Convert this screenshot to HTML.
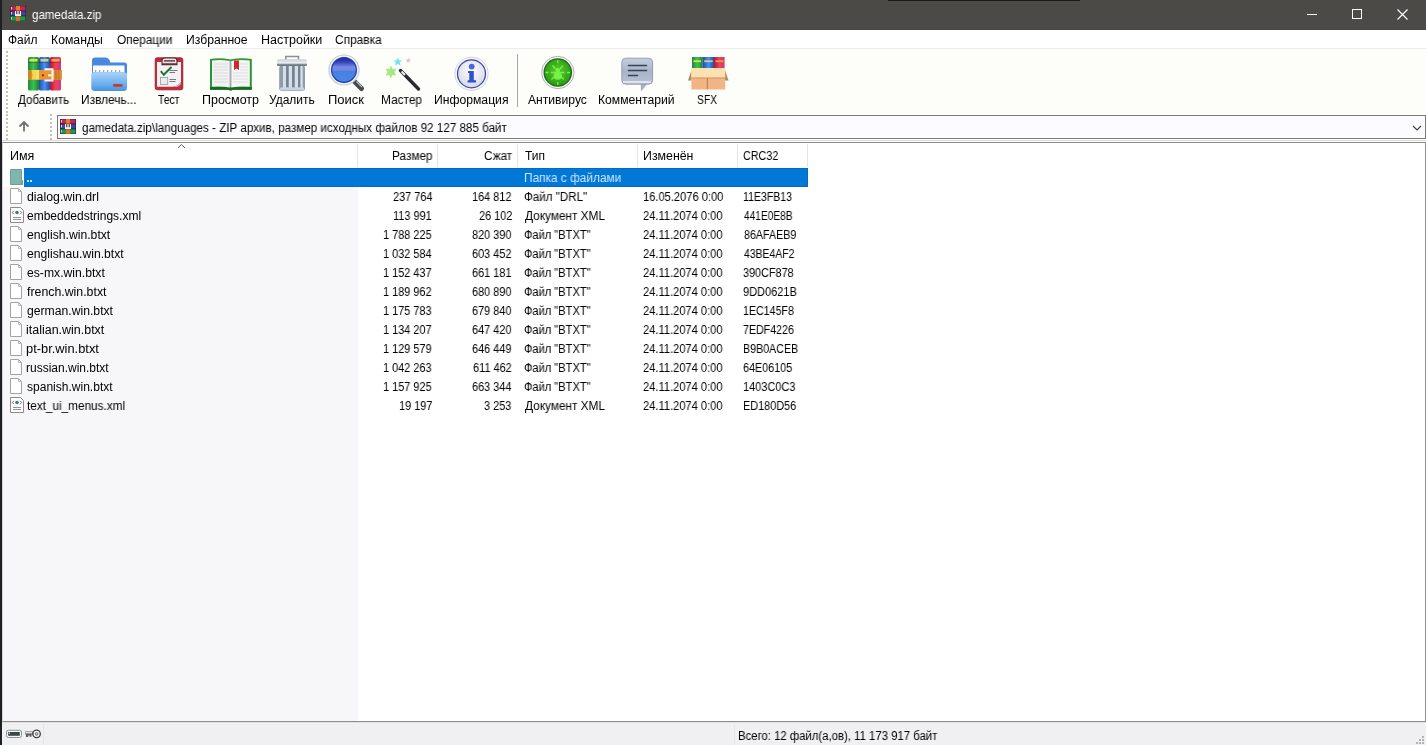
<!DOCTYPE html><html><head><meta charset="utf-8"><style>*{box-sizing:border-box}
html,body{margin:0;padding:0;width:1426px;height:745px;overflow:hidden;background:#fff;font-family:"Liberation Sans",sans-serif;font-size:12px;line-height:14px;color:#000}
.a{position:absolute;white-space:pre;transform-origin:0 0;will-change:transform}
.t{color:#000}
.r{text-align:right}
.ic{left:10px;width:12px;height:16px}
.ic svg{display:block}
.lbl{top:92px}
</style></head><body><div class="a" style="left:0;top:0;width:2px;height:745px;background:#1d2024"></div>
<div class="a" style="left:2px;top:0;width:1424px;height:30px;background:#4c4a47"></div>
<div class="a" style="left:888px;top:0;width:192px;height:1px;background:#1a1915"></div>
<!-- window controls -->
<div class="a" style="left:1307px;top:14px;width:10px;height:1px;background:#fff"></div>
<div class="a" style="left:1352px;top:9px;width:10px;height:10px;border:1px solid #fff"></div>
<svg class="a" style="left:1397px;top:9px" width="11" height="11" viewBox="0 0 11 11"><path d="M0.5 0.5L10.5 10.5M10.5 0.5L0.5 10.5" stroke="#fff" stroke-width="1.15"/></svg>
<!-- menu -->
<div class="a" style="left:2px;top:30px;width:1424px;height:19px;background:#fff"></div>
<div class="a" style="left:2px;top:48px;width:1424px;height:1px;background:#ededed"></div>
<!-- toolbar -->
<div class="a" style="left:2px;top:49px;width:1424px;height:93px;background:#fdfdfa"></div>
<!-- address -->
<div class="a" style="left:57px;top:115px;width:1369px;height:24px;border:1px solid #7a7a7a;background:#fcfcfe"></div>
<div class="a" style="left:2px;top:140px;width:1424px;height:1px;background:#dcdcdc"></div>
<!-- list -->
<div class="a" style="left:2px;top:142px;width:1424px;height:580px;background:#fff;border-top:1px solid #8c8c8c;border-left:1px solid #d4d4d4;border-right:1px solid #8c8c8c;border-bottom:1px solid #8c8c8c"></div>
<div class="a" style="left:3px;top:187px;width:355px;height:534px;background:#f7f6f9"></div>
<div class="a" style="left:357px;top:144px;width:1px;height:23px;background:#e5e5e5"></div>
<div class="a" style="left:437px;top:144px;width:1px;height:23px;background:#e5e5e5"></div>
<div class="a" style="left:517px;top:144px;width:1px;height:23px;background:#e5e5e5"></div>
<div class="a" style="left:637px;top:144px;width:1px;height:23px;background:#e5e5e5"></div>
<div class="a" style="left:737px;top:144px;width:1px;height:23px;background:#e5e5e5"></div>
<div class="a" style="left:807px;top:144px;width:1px;height:23px;background:#e5e5e5"></div>
<!-- selected row -->
<div class="a" style="left:24px;top:168px;width:784px;height:19px;background:#0078d7;border-top:1px solid #0a68c0;border-bottom:1px solid #0a68c0;border-right:1px solid #0a68c0"></div>
<svg class="a" style="left:10px;top:169px" width="13" height="17" viewBox="0 0 13 17"><path d="M0.5 0.5H11.5V10.5L12.5 11.5V15.5H0.5Z" fill="#80b6ab" stroke="#6f9f95"/><path d="M11 11V15" stroke="#6f9f95"/></svg>
<div class="a" style="left:27px;top:180px;width:2px;height:2px;background:#a8e4ff"></div><div class="a" style="left:30px;top:180px;width:2px;height:2px;background:#a8e4ff"></div>
<!-- status -->
<div class="a" style="left:2px;top:722px;width:1424px;height:23px;background:#f0eff2;border-top:1px solid #e2e2e2"></div>
<div class="a" style="left:43px;top:724px;width:1px;height:21px;background:#e6e6e6"></div>
<div class="a" style="left:734px;top:724px;width:1px;height:21px;background:#e6e6e6"></div><div class="a ic" style="top:188px"><svg width="13" height="17" viewBox="0 0 13 17"><path d="M0.5 0.5H8.5L11.5 3.5V15.5H0.5Z" fill="#fff" stroke="#a2a2a2"/><path d="M8.5 0.5V3.5H11.5" fill="none" stroke="#b8b8b8"/></svg>
</div><div class="a ic" style="top:207px"><svg width="15" height="17" viewBox="0 0 15 17"><path d="M0.5 0.5H10.5L13.5 3.5V15.5H0.5Z" fill="#fdfdfd" stroke="#8c8c8c"/><circle cx="7" cy="5.5" r="1.8" fill="#3c7f80"/><path d="M3.8 3.8L2.3 5.5L3.8 7.2M10.2 3.8L11.7 5.5L10.2 7.2" fill="none" stroke="#666" stroke-width="0.9"/><path d="M3 10.5H11M3 12.5H11" stroke="#888" stroke-width="0.9"/></svg>
</div><div class="a ic" style="top:226px"><svg width="13" height="17" viewBox="0 0 13 17"><path d="M0.5 0.5H8.5L11.5 3.5V15.5H0.5Z" fill="#fff" stroke="#a2a2a2"/><path d="M8.5 0.5V3.5H11.5" fill="none" stroke="#b8b8b8"/></svg>
</div><div class="a ic" style="top:245px"><svg width="13" height="17" viewBox="0 0 13 17"><path d="M0.5 0.5H8.5L11.5 3.5V15.5H0.5Z" fill="#fff" stroke="#a2a2a2"/><path d="M8.5 0.5V3.5H11.5" fill="none" stroke="#b8b8b8"/></svg>
</div><div class="a ic" style="top:264px"><svg width="13" height="17" viewBox="0 0 13 17"><path d="M0.5 0.5H8.5L11.5 3.5V15.5H0.5Z" fill="#fff" stroke="#a2a2a2"/><path d="M8.5 0.5V3.5H11.5" fill="none" stroke="#b8b8b8"/></svg>
</div><div class="a ic" style="top:283px"><svg width="13" height="17" viewBox="0 0 13 17"><path d="M0.5 0.5H8.5L11.5 3.5V15.5H0.5Z" fill="#fff" stroke="#a2a2a2"/><path d="M8.5 0.5V3.5H11.5" fill="none" stroke="#b8b8b8"/></svg>
</div><div class="a ic" style="top:302px"><svg width="13" height="17" viewBox="0 0 13 17"><path d="M0.5 0.5H8.5L11.5 3.5V15.5H0.5Z" fill="#fff" stroke="#a2a2a2"/><path d="M8.5 0.5V3.5H11.5" fill="none" stroke="#b8b8b8"/></svg>
</div><div class="a ic" style="top:321px"><svg width="13" height="17" viewBox="0 0 13 17"><path d="M0.5 0.5H8.5L11.5 3.5V15.5H0.5Z" fill="#fff" stroke="#a2a2a2"/><path d="M8.5 0.5V3.5H11.5" fill="none" stroke="#b8b8b8"/></svg>
</div><div class="a ic" style="top:340px"><svg width="13" height="17" viewBox="0 0 13 17"><path d="M0.5 0.5H8.5L11.5 3.5V15.5H0.5Z" fill="#fff" stroke="#a2a2a2"/><path d="M8.5 0.5V3.5H11.5" fill="none" stroke="#b8b8b8"/></svg>
</div><div class="a ic" style="top:359px"><svg width="13" height="17" viewBox="0 0 13 17"><path d="M0.5 0.5H8.5L11.5 3.5V15.5H0.5Z" fill="#fff" stroke="#a2a2a2"/><path d="M8.5 0.5V3.5H11.5" fill="none" stroke="#b8b8b8"/></svg>
</div><div class="a ic" style="top:378px"><svg width="13" height="17" viewBox="0 0 13 17"><path d="M0.5 0.5H8.5L11.5 3.5V15.5H0.5Z" fill="#fff" stroke="#a2a2a2"/><path d="M8.5 0.5V3.5H11.5" fill="none" stroke="#b8b8b8"/></svg>
</div><div class="a ic" style="top:397px"><svg width="15" height="17" viewBox="0 0 15 17"><path d="M0.5 0.5H10.5L13.5 3.5V15.5H0.5Z" fill="#fdfdfd" stroke="#8c8c8c"/><circle cx="7" cy="5.5" r="1.8" fill="#3c7f80"/><path d="M3.8 3.8L2.3 5.5L3.8 7.2M10.2 3.8L11.7 5.5L10.2 7.2" fill="none" stroke="#666" stroke-width="0.9"/><path d="M3 10.5H11M3 12.5H11" stroke="#888" stroke-width="0.9"/></svg>
</div><svg class="a" style="left:0;top:0" width="1426" height="745" viewBox="0 0 1426 745">
<defs>
<linearGradient id="gG" x1="0" x2="1" y1="0" y2="0"><stop offset="0" stop-color="#1e8a34"/><stop offset="0.5" stop-color="#3cc155"/><stop offset="1" stop-color="#1f7f30"/></linearGradient>
<linearGradient id="gB" x1="0" x2="1" y1="0" y2="0"><stop offset="0" stop-color="#1d4fb0"/><stop offset="0.5" stop-color="#4a8ff0"/><stop offset="1" stop-color="#2050a8"/></linearGradient>
<linearGradient id="gR" x1="0" x2="1" y1="0" y2="0"><stop offset="0" stop-color="#b01830"/><stop offset="0.5" stop-color="#f04060"/><stop offset="1" stop-color="#d03a70"/></linearGradient>
<linearGradient id="gBelt" x1="0" x2="0" y1="0" y2="1"><stop offset="0" stop-color="#f8c040"/><stop offset="0.5" stop-color="#e8a030"/><stop offset="1" stop-color="#b86a10"/></linearGradient>
<linearGradient id="gFolderF" x1="0" x2="0" y1="0" y2="1"><stop offset="0" stop-color="#a6d4fa"/><stop offset="0.6" stop-color="#6eb0f0"/><stop offset="1" stop-color="#4a90e0"/></linearGradient>
<linearGradient id="gTrashLid" x1="0" x2="0" y1="0" y2="1"><stop offset="0" stop-color="#c8ccd4"/><stop offset="0.5" stop-color="#e8ecf0"/><stop offset="1" stop-color="#8a9098"/></linearGradient>
<radialGradient id="gLens" cx="0.5" cy="0.35" r="0.6"><stop offset="0" stop-color="#7fa0f0"/><stop offset="0.7" stop-color="#3b6ee0"/><stop offset="1" stop-color="#1a38a8"/></radialGradient>
<radialGradient id="gInfo" cx="0.5" cy="0.4" r="0.6"><stop offset="0" stop-color="#ffffff"/><stop offset="1" stop-color="#d4d8e4"/></radialGradient>
<radialGradient id="gAV" cx="0.5" cy="0.45" r="0.55"><stop offset="0" stop-color="#58d028"/><stop offset="1" stop-color="#2c9a18"/></radialGradient>
<linearGradient id="gLens2" x1="0" x2="0" y1="0" y2="1"><stop offset="0" stop-color="#1c2896"/><stop offset="0.18" stop-color="#3444b8"/><stop offset="0.38" stop-color="#7a88e4"/><stop offset="0.52" stop-color="#6a86e4"/><stop offset="0.56" stop-color="#4a7ee0"/><stop offset="1" stop-color="#4a88e8"/></linearGradient>
<linearGradient id="gBub" x1="0" x2="0" y1="0" y2="1"><stop offset="0" stop-color="#c4cee0"/><stop offset="0.5" stop-color="#a8b4ca"/><stop offset="1" stop-color="#b8c2d4"/></linearGradient>
</defs>
<!-- ADD: winrar books -->
<g>
<rect x="28" y="57" width="11" height="33.5" rx="1.5" fill="url(#gG)"/>
<rect x="39" y="57" width="11" height="33.5" rx="1.5" fill="url(#gB)"/>
<rect x="50" y="57" width="11" height="33.5" rx="1.5" fill="url(#gR)"/>
<rect x="29.5" y="59" width="8" height="2.5" fill="#d8e050"/>
<rect x="40.5" y="59" width="8" height="2.5" fill="#d8c888"/>
<rect x="51.5" y="59" width="8" height="2.5" fill="#f8a040"/>
<rect x="28" y="62" width="33" height="1" fill="#000" opacity="0.2"/>
<rect x="28" y="70" width="33.7" height="9.6" fill="#e0a030"/>
<rect x="28" y="70" width="3.5" height="9.6" fill="#c88a20"/>
<path d="M31.5 70H37V79.6H31.5Q33.5 75 31.5 70Z" fill="#f4d658"/>
<rect x="36.5" y="70" width="2.5" height="9.6" fill="#f8e070"/>
<rect x="39" y="70" width="13" height="9.6" fill="#ea9434"/>
<rect x="54" y="70" width="7.7" height="9.6" fill="#e08a34"/>
<rect x="55.5" y="70" width="1" height="9.6" fill="#a85a10" opacity="0.7"/>
<rect x="58.2" y="70" width="1" height="9.6" fill="#a85a10" opacity="0.6"/>
<circle cx="43" cy="75.3" r="1.1" fill="#7a3000"/>
<rect x="48" y="74.3" width="3.5" height="2" fill="#fff4ea"/>
<path d="M44.5 69.2H52.5V80.5H44.5" fill="none" stroke="#fff8f0" stroke-width="2"/>
</g>
<!-- EXTRACT: folder -->
<g>
<path d="M92 60.5Q92 57.5 95 57.5H106Q108 57.5 109.5 60L110.5 62.5H124.5Q127 62.5 127 65V88H92Z" fill="#4a88e0"/>
<rect x="93" y="65.5" width="31.5" height="7" fill="#fbfdff"/>
<g fill="#9aa4b0"><rect x="95" y="70" width="1.2" height="2"/><rect x="99" y="70" width="1.2" height="2"/><rect x="103" y="70" width="1.2" height="2"/><rect x="107" y="70" width="1.2" height="2"/><rect x="111" y="70" width="1.2" height="2"/><rect x="115" y="70" width="1.2" height="2"/><rect x="119" y="70" width="1.2" height="2"/></g>
<path d="M91.3 74Q91.3 72.5 93 72.5H125Q127 72.5 127 74.5V87.5Q127 91 123.5 91H95Q91.3 91 91.3 87.5Z" fill="url(#gFolderF)"/>
<rect x="113" y="84" width="9.6" height="2.8" rx="1.4" fill="#c83a2a"/>
</g>
<!-- TEST: clipboard -->
<g>
<rect x="155.2" y="57.8" width="27.6" height="32" rx="2" fill="#c42a3a" stroke="#8e1824" stroke-width="0.8"/>
<path d="M157 62H181V82Q178 86.5 172 86.8H157Z" fill="#f2f2f4"/>
<path d="M172 86.8Q178 86.5 181 82V84Q179 88 172 86.8Z" fill="#c8a8ac"/>
<path d="M162 64.8V60.5Q162 58 165 58H174Q177 58 177 60.5V64.8Z" fill="#e8e4e6" stroke="#5a2630" stroke-width="1.1"/>
<rect x="164" y="60.2" width="11" height="1.4" fill="#6a2e38"/>
<rect x="162" y="63.3" width="15" height="1.5" fill="#5a2630"/>
<path d="M160.8 71.2L163.8 74.8L171.5 67" fill="none" stroke="#267434" stroke-width="2"/>
<rect x="160.5" y="77.5" width="7.2" height="7" fill="#ececf0" stroke="#9a9aa4" stroke-width="0.8"/>
<g fill="#6a6a74"><rect x="169.5" y="70" width="8" height="0.9"/><rect x="169.5" y="72" width="5.5" height="0.9"/><rect x="169.5" y="79" width="6.5" height="0.9"/><rect x="169.5" y="81" width="6" height="0.9"/></g>
</g>
<!-- VIEW: book -->
<g>
<path d="M210 59Q220 57.5 230.5 59.5Q241 57.5 251.8 59V89.8H233Q230.5 91 228 89.8H210Z" fill="#2a9636"/>
<path d="M210 87H251.8V89.8H233Q230.5 91 228 89.8H210Z" fill="#1a6a26"/>
<path d="M212 60.5Q221 59.5 230 61V87.5Q221 86 212 86.8Z" fill="#f2f2f3"/>
<path d="M231 61Q240 59.5 249.8 60.5V86.8Q240 86 231 87.5Z" fill="#f6f6f7"/>
<rect x="229" y="61" width="3" height="26" fill="#d4d4d8"/>
<rect x="230" y="61" width="1" height="26" fill="#a8a8ae"/>
<g stroke="#d2d2d8" stroke-width="0.7"><path d="M214 64H228M214 67H228M214 70H228M214 73H228M214 76H228M214 79H228M214 82H228M233 73H248M233 76H248M233 79H248M233 82H248M240 64H248M240 67H248M240 70H248"/></g>
<path d="M234 60.5H239V70L236.5 68.5L234 70Z" fill="#d02828"/>
</g>
<!-- DELETE: trash -->
<g>
<path d="M285.8 59.5V56.5H298.5V59.5" fill="none" stroke="#8a9098" stroke-width="1.6"/>
<rect x="279.2" y="65.5" width="25.8" height="25.3" rx="2.5" fill="#8e9cac"/>
<g fill="#d4dfea"><rect x="283" y="66" width="3.2" height="22"/><rect x="289" y="66" width="3.2" height="22"/><rect x="295" y="66" width="3.2" height="22"/><rect x="300.5" y="66" width="2.2" height="22"/></g>
<g fill="#6e7c8c"><rect x="286.2" y="66" width="1.6" height="21"/><rect x="292.2" y="66" width="1.6" height="21"/><rect x="298.2" y="66" width="1.6" height="21"/></g>
<rect x="280" y="87.5" width="24.2" height="2.5" rx="1" fill="#c8d2dc"/>
<rect x="277" y="59.3" width="29.9" height="6.4" rx="1.5" fill="url(#gTrashLid)"/>
<rect x="277" y="64.5" width="29.9" height="1.2" fill="#5a6470"/>
</g>
<!-- FIND: magnifier -->
<g>
<line x1="354.5" y1="81.5" x2="361.5" y2="88.5" stroke="#46494e" stroke-width="5" stroke-linecap="round"/>
<line x1="356.5" y1="81.5" x2="362" y2="87" stroke="#b8bcc0" stroke-width="1.2"/>
<circle cx="344" cy="70" r="15" fill="#f6fafc" stroke="#c4cace" stroke-width="1.2"/>
<circle cx="344" cy="70" r="13.6" fill="none" stroke="#d8f4f8" stroke-width="1"/>
<circle cx="344" cy="70" r="12.4" fill="url(#gLens2)"/>
<circle cx="344" cy="70" r="12.4" fill="none" stroke="#2436a8" stroke-width="1.2"/>
</g>
<!-- WIZARD -->
<g>
<line x1="400.5" y1="70.5" x2="418.5" y2="89" stroke="#2a2a2e" stroke-width="3.4" stroke-linecap="round"/>
<line x1="401.5" y1="71.5" x2="405" y2="75" stroke="#f0f0f4" stroke-width="2"/>
<path d="M391 65.5L392.6 69L396.5 68.8L394.4 72L396.3 75.4L392.5 75L391 78.5L389.3 75L385.5 75.4L387.5 72L385.5 68.8L389.4 69Z" fill="#a8e880"/>
<path d="M397.8 57.5L399 60.3L402 60.5L399.8 62.5L400.5 65.5L397.8 64L395 65.5L395.8 62.5L393.6 60.5L396.6 60.3Z" fill="#78e4f0"/>
<path d="M408.3 57.5L409.1 59.4L411.1 59.5L409.6 60.9L410.1 62.9L408.3 61.8L406.5 62.9L407 60.9L405.5 59.5L407.5 59.4Z" fill="#f4bcc8"/>
</g>
<!-- INFO -->
<g>
<circle cx="471.5" cy="73.8" r="16.6" fill="#f4f6fa" stroke="#c8ccd4" stroke-width="0.8"/>
<circle cx="471.5" cy="73.8" r="14" fill="url(#gInfo)" stroke="#3a44a8" stroke-width="1.2"/>
<circle cx="471.7" cy="66.6" r="2.9" fill="#4a66d8"/>
<path d="M468 71H473.8V80.3H476V82.6H467.6V80.3H469.3V73H468Z" fill="#3050d0"/>
</g>
<!-- separator -->
<rect x="517" y="54" width="1" height="53" fill="#a6a6a6"/>
<!-- ANTIVIRUS -->
<g>
<circle cx="557.8" cy="72.5" r="16.2" fill="#f8f8f8" stroke="#a8a8a8" stroke-width="0.9"/>
<circle cx="557.8" cy="72.5" r="14.3" fill="#1b6a1a"/>
<circle cx="557.8" cy="72.5" r="13" fill="url(#gAV)"/>
<g stroke="#78f048" stroke-width="1.3" fill="none">
<path d="M557.8 60V63M557.8 82V85M545.5 72.5H548.5M567 72.5H570"/>
<path d="M552.5 65.5L555.5 69M563 65.5L560 69M551 72.5H564.5M551.5 79.5L554.5 76.5M564 79.5L561 76.5"/>
</g>
<circle cx="557.8" cy="70.3" r="2.2" fill="#78f048"/>
<ellipse cx="557.8" cy="76" rx="4.2" ry="3.8" fill="#78f048"/>
</g>
<!-- COMMENT -->
<g>
<path d="M641 83.5L641.5 90.5L647 83.5Z" fill="#a8b2c4" stroke="#8a94a8" stroke-width="0.6"/>
<rect x="621.8" y="58.2" width="30.8" height="26" rx="4" fill="url(#gBub)" stroke="#8e98ac" stroke-width="0.9"/>
<rect x="623" y="81" width="28" height="2" fill="#e8ecf4" opacity="0.8"/>
<g stroke="#3a4252" stroke-width="1.6" stroke-linecap="round"><path d="M628.5 65.5H646.5M628.5 70.5H646.5M628.5 75.5H637.5"/></g>
</g>
<!-- SFX -->
<g>
<rect x="692" y="57" width="10.8" height="11.5" fill="url(#gG)"/>
<rect x="702.8" y="57" width="11.2" height="11.5" fill="url(#gB)"/>
<rect x="714" y="57" width="10.6" height="11.5" fill="url(#gR)"/>
<rect x="693.5" y="60.3" width="7.5" height="1.8" fill="#d8e050"/>
<rect x="704.2" y="60.3" width="8.5" height="1.8" fill="#d8c888"/>
<rect x="715.5" y="60.3" width="8" height="1.8" fill="#f8a040"/>
<path d="M688 80.5L691.5 70V80.5Z" fill="#b08868"/>
<path d="M728.5 80.5L725 70V80.5Z" fill="#b08868"/>
<rect x="691.4" y="68" width="33.8" height="10" fill="#fbe2b0"/>
<rect x="691.4" y="77.5" width="33.8" height="12" fill="#f2b484"/>
<rect x="691.4" y="77.5" width="33.8" height="1.2" fill="#dca070"/>
<rect x="706.8" y="78" width="1" height="11.5" fill="#c07848"/>
</g>
<!-- title icon small winrar -->
<g id="wr16">
<rect x="10" y="6" width="16" height="15" fill="#2a1420"/>
<rect x="10.5" y="6.3" width="15" height="4.2" fill="#c02a52"/>
<rect x="10.5" y="11.3" width="15" height="4.2" fill="#4048a4"/>
<rect x="10.5" y="16.3" width="15" height="4.4" fill="#1f9a44"/>
<rect x="16" y="6" width="4" height="4.6" fill="#e8782c"/>
<rect x="16" y="16.3" width="4" height="4.7" fill="#d86e28"/>
<rect x="15" y="11" width="6" height="5" fill="#f6f0f6"/>
<rect x="16.3" y="11" width="1" height="3.2" fill="#3a1020"/><rect x="18.7" y="11" width="1" height="3.2" fill="#3a1020"/>
<rect x="11" y="7" width="1" height="2.5" fill="#fff" opacity="0.75"/><rect x="11" y="12" width="1" height="2.5" fill="#fff" opacity="0.75"/><rect x="11" y="17" width="1" height="2.5" fill="#b8ffb0" opacity="0.8"/>
</g>
<g transform="translate(50 113)">
<rect x="10" y="6" width="16" height="15" fill="#2a1420"/>
<rect x="10.5" y="6.3" width="15" height="4.2" fill="#c02a52"/>
<rect x="10.5" y="11.3" width="15" height="4.2" fill="#4048a4"/>
<rect x="10.5" y="16.3" width="15" height="4.4" fill="#1f9a44"/>
<rect x="16" y="6" width="4" height="4.6" fill="#e8782c"/>
<rect x="16" y="16.3" width="4" height="4.7" fill="#d86e28"/>
<rect x="15" y="11" width="6" height="5" fill="#f6f0f6"/>
<rect x="16.3" y="11" width="1" height="3.2" fill="#3a1020"/><rect x="18.7" y="11" width="1" height="3.2" fill="#3a1020"/>
<rect x="11" y="7" width="1" height="2.5" fill="#fff" opacity="0.75"/><rect x="11" y="12" width="1" height="2.5" fill="#fff" opacity="0.75"/><rect x="11" y="17" width="1" height="2.5" fill="#b8ffb0" opacity="0.8"/>
</g>
<!-- up arrow -->
<path d="M24 131.5V122M19.5 126.5L24 122L28.5 126.5" fill="none" stroke="#707070" stroke-width="1.8"/>
<!-- chevron -->
<path d="M1413 126L1417 130L1421 126" fill="none" stroke="#404040" stroke-width="1.1"/>
<!-- sort arrow -->
<path d="M178 148L181.5 144.5L185 148" fill="none" stroke="#5a5a5a" stroke-width="1"/>
<!-- grips -->
<g fill="#c0c0c0"><rect x="6" y="51" width="2" height="2"/><rect x="6" y="55" width="2" height="2"/><rect x="6" y="59" width="2" height="2"/><rect x="6" y="63" width="2" height="2"/><rect x="6" y="67" width="2" height="2"/><rect x="6" y="71" width="2" height="2"/><rect x="6" y="75" width="2" height="2"/><rect x="6" y="79" width="2" height="2"/><rect x="6" y="83" width="2" height="2"/><rect x="6" y="87" width="2" height="2"/><rect x="6" y="91" width="2" height="2"/><rect x="6" y="95" width="2" height="2"/><rect x="6" y="99" width="2" height="2"/><rect x="6" y="103" width="2" height="2"/><rect x="6" y="107" width="2" height="2"/><rect x="6" y="111" width="2" height="2"/><rect x="6" y="114" width="2" height="2"/><rect x="6" y="118" width="2" height="2"/><rect x="6" y="122" width="2" height="2"/><rect x="6" y="126" width="2" height="2"/><rect x="6" y="130" width="2" height="2"/><rect x="6" y="134" width="2" height="2"/><rect x="6" y="138" width="2" height="2"/><rect x="50" y="114" width="2" height="2"/><rect x="50" y="118" width="2" height="2"/><rect x="50" y="122" width="2" height="2"/><rect x="50" y="126" width="2" height="2"/><rect x="50" y="130" width="2" height="2"/><rect x="50" y="134" width="2" height="2"/><rect x="50" y="138" width="2" height="2"/></g>
<!-- size grip -->
<g fill="#b4b4b4"><rect x="1422" y="736" width="2" height="2"/><rect x="1419" y="739" width="2" height="2"/><rect x="1422" y="739" width="2" height="2"/><rect x="1416" y="742" width="2" height="2"/><rect x="1419" y="742" width="2" height="2"/><rect x="1422" y="742" width="2" height="2"/></g>
<!-- status drive icon -->
<rect x="6.5" y="730.3" width="15" height="7.2" rx="1.8" fill="#f4f6f6" stroke="#8a9292" stroke-width="1"/>
<rect x="8.2" y="732" width="11.6" height="3.8" fill="#3c4648"/>
<circle cx="9.4" cy="733.2" r="0.6" fill="#e8f0f0"/>
<!-- key icon -->
<path d="M25.2 731.5H33V734.6H31.5V736.8H29.6V735.4H28.2V737H26V734.6H25.2Z" fill="#5a5c5e"/>
<rect x="25.5" y="732.1" width="7" height="1.3" fill="#f0f0f0"/>
<circle cx="36.6" cy="733.9" r="3.7" fill="#fff" stroke="#3a3a3a" stroke-width="1.3"/>
<circle cx="36.6" cy="733.9" r="1.4" fill="#c8c8c8" stroke="#555" stroke-width="0.8"/>
</svg>
<div class="a" style="left:31.60px;top:8px;color:#fff;transform:scaleX(0.9639)">gamedata.zip</div><div class="a" style="left:8.30px;top:33px;color:#000;transform:scaleX(1.0000)">Файл</div><div class="a" style="left:51.48px;top:33px;color:#000;transform:scaleX(1.0204)">Команды</div><div class="a" style="left:117.30px;top:33px;color:#000;transform:scaleX(0.9857)">Операции</div><div class="a" style="left:186.39px;top:33px;color:#000;transform:scaleX(1.0133)">Избранное</div><div class="a" style="left:261.26px;top:33px;color:#000;transform:scaleX(1.0421)">Настройки</div><div class="a" style="left:335.01px;top:33px;color:#000;transform:scaleX(0.9891)">Справка</div><div class="a" style="left:18.20px;top:93px;color:#000;transform:scaleX(0.9660)">Добавить</div><div class="a" style="left:80.81px;top:93px;color:#000;transform:scaleX(0.9907)">Извлечь...</div><div class="a" style="left:157.80px;top:93px;color:#000;transform:scaleX(0.8680)">Тест</div><div class="a" style="left:201.56px;top:93px;color:#000;transform:scaleX(1.0407)">Просмотр</div><div class="a" style="left:269.11px;top:93px;color:#000;transform:scaleX(0.9909)">Удалить</div><div class="a" style="left:328.42px;top:93px;color:#000;transform:scaleX(1.0844)">Поиск</div><div class="a" style="left:381.01px;top:93px;color:#000;transform:scaleX(0.9875)">Мастер</div><div class="a" style="left:433.99px;top:93px;color:#000;transform:scaleX(1.0139)">Информация</div><div class="a" style="left:528.00px;top:93px;color:#000;transform:scaleX(1.0103)">Антивирус</div><div class="a" style="left:597.99px;top:93px;color:#000;transform:scaleX(1.0135)">Комментарий</div><div class="a" style="left:696.84px;top:93px;color:#000;transform:scaleX(0.8636)">SFX</div><div class="a" style="left:81.70px;top:121px;color:#000;transform:scaleX(0.9699)">gamedata.zip\languages - ZIP архив, размер исходных файлов 92 127 885 байт</div><div class="a" style="left:9.66px;top:149px;color:#000;transform:scaleX(1.0409)">Имя</div><div class="a" style="left:391.62px;top:149px;color:#000;transform:scaleX(0.9825)">Размер</div><div class="a" style="left:483.52px;top:149px;color:#000;transform:scaleX(0.9750)">Сжат</div><div class="a" style="left:524.50px;top:149px;color:#000;transform:scaleX(0.9947)">Тип</div><div class="a" style="left:643.37px;top:149px;color:#000;transform:scaleX(1.0298)">Изменён</div><div class="a" style="left:743.40px;top:149px;color:#000;transform:scaleX(0.8974)">CRC32</div><div class="a" style="left:738.45px;top:729px;color:#000;transform:scaleX(0.9457)">Всего: 12 файл(а,ов), 11 173 917 байт</div><div class="a" style="left:26.60px;top:190px;color:#000;transform:scaleX(1.0275)">dialog.win.drl</div><div class="a" style="left:392.57px;top:190px;color:#000;transform:scaleX(0.9100)">237 764</div><div class="a" style="left:472.37px;top:190px;color:#000;transform:scaleX(0.9100)">164 812</div><div class="a" style="left:523.63px;top:190px;color:#000;transform:scaleX(0.9672)">Файл &quot;DRL&quot;</div><div class="a" style="left:643.47px;top:190px;color:#000;transform:scaleX(0.9260)">16.05.2076 0:00</div><div class="a" style="left:743.32px;top:190px;color:#000;transform:scaleX(0.8764)">11E3FB13</div><div class="a" style="left:26.60px;top:209px;color:#000;transform:scaleX(0.9974)">embeddedstrings.xml</div><div class="a" style="left:393.48px;top:209px;color:#000;transform:scaleX(0.9100)">113 991</div><div class="a" style="left:478.74px;top:209px;color:#000;transform:scaleX(0.9100)">26 102</div><div class="a" style="left:524.60px;top:209px;color:#000;transform:scaleX(0.9852)">Документ XML</div><div class="a" style="left:643.47px;top:209px;color:#000;transform:scaleX(0.9260)">24.11.2074 0:00</div><div class="a" style="left:744.20px;top:209px;color:#000;transform:scaleX(0.8456)">441E0E8B</div><div class="a" style="left:26.60px;top:228px;color:#000;transform:scaleX(1.0146)">english.win.btxt</div><div class="a" style="left:383.47px;top:228px;color:#000;transform:scaleX(0.9100)">1 788 225</div><div class="a" style="left:472.37px;top:228px;color:#000;transform:scaleX(0.9100)">820 390</div><div class="a" style="left:523.68px;top:228px;color:#000;transform:scaleX(0.9239)">Файл &quot;BTXT&quot;</div><div class="a" style="left:643.47px;top:228px;color:#000;transform:scaleX(0.9260)">24.11.2074 0:00</div><div class="a" style="left:744.20px;top:228px;color:#000;transform:scaleX(0.8914)">86AFAEB9</div><div class="a" style="left:26.60px;top:247px;color:#000;transform:scaleX(1.0137)">englishau.win.btxt</div><div class="a" style="left:383.47px;top:247px;color:#000;transform:scaleX(0.9100)">1 032 584</div><div class="a" style="left:472.37px;top:247px;color:#000;transform:scaleX(0.9100)">603 452</div><div class="a" style="left:523.68px;top:247px;color:#000;transform:scaleX(0.9239)">Файл &quot;BTXT&quot;</div><div class="a" style="left:643.47px;top:247px;color:#000;transform:scaleX(0.9260)">24.11.2074 0:00</div><div class="a" style="left:744.20px;top:247px;color:#000;transform:scaleX(0.8707)">43BE4AF2</div><div class="a" style="left:26.60px;top:266px;color:#000;transform:scaleX(1.0143)">es-mx.win.btxt</div><div class="a" style="left:383.47px;top:266px;color:#000;transform:scaleX(0.9100)">1 152 437</div><div class="a" style="left:472.37px;top:266px;color:#000;transform:scaleX(0.9100)">661 181</div><div class="a" style="left:523.68px;top:266px;color:#000;transform:scaleX(0.9239)">Файл &quot;BTXT&quot;</div><div class="a" style="left:643.47px;top:266px;color:#000;transform:scaleX(0.9260)">24.11.2074 0:00</div><div class="a" style="left:743.30px;top:266px;color:#000;transform:scaleX(0.9036)">390CF878</div><div class="a" style="left:26.60px;top:285px;color:#000;transform:scaleX(1.0273)">french.win.btxt</div><div class="a" style="left:383.47px;top:285px;color:#000;transform:scaleX(0.9100)">1 189 962</div><div class="a" style="left:472.37px;top:285px;color:#000;transform:scaleX(0.9100)">680 890</div><div class="a" style="left:523.68px;top:285px;color:#000;transform:scaleX(0.9239)">Файл &quot;BTXT&quot;</div><div class="a" style="left:643.47px;top:285px;color:#000;transform:scaleX(0.9260)">24.11.2074 0:00</div><div class="a" style="left:743.28px;top:285px;color:#000;transform:scaleX(0.9175)">9DD0621B</div><div class="a" style="left:26.60px;top:304px;color:#000;transform:scaleX(1.0153)">german.win.btxt</div><div class="a" style="left:383.47px;top:304px;color:#000;transform:scaleX(0.9100)">1 175 783</div><div class="a" style="left:472.37px;top:304px;color:#000;transform:scaleX(0.9100)">679 840</div><div class="a" style="left:523.68px;top:304px;color:#000;transform:scaleX(0.9239)">Файл &quot;BTXT&quot;</div><div class="a" style="left:643.47px;top:304px;color:#000;transform:scaleX(0.9260)">24.11.2074 0:00</div><div class="a" style="left:743.31px;top:304px;color:#000;transform:scaleX(0.8875)">1EC145F8</div><div class="a" style="left:25.56px;top:323px;color:#000;transform:scaleX(1.0392)">italian.win.btxt</div><div class="a" style="left:383.47px;top:323px;color:#000;transform:scaleX(0.9100)">1 134 207</div><div class="a" style="left:472.37px;top:323px;color:#000;transform:scaleX(0.9100)">647 420</div><div class="a" style="left:523.68px;top:323px;color:#000;transform:scaleX(0.9239)">Файл &quot;BTXT&quot;</div><div class="a" style="left:643.47px;top:323px;color:#000;transform:scaleX(0.9260)">24.11.2074 0:00</div><div class="a" style="left:743.31px;top:323px;color:#000;transform:scaleX(0.8875)">7EDF4226</div><div class="a" style="left:25.53px;top:342px;color:#000;transform:scaleX(1.0716)">pt-br.win.btxt</div><div class="a" style="left:383.47px;top:342px;color:#000;transform:scaleX(0.9100)">1 129 579</div><div class="a" style="left:472.37px;top:342px;color:#000;transform:scaleX(0.9100)">646 449</div><div class="a" style="left:523.68px;top:342px;color:#000;transform:scaleX(0.9239)">Файл &quot;BTXT&quot;</div><div class="a" style="left:643.47px;top:342px;color:#000;transform:scaleX(0.9260)">24.11.2074 0:00</div><div class="a" style="left:743.31px;top:342px;color:#000;transform:scaleX(0.8902)">B9B0ACEB</div><div class="a" style="left:25.60px;top:361px;color:#000;transform:scaleX(1.0000)">russian.win.btxt</div><div class="a" style="left:383.47px;top:361px;color:#000;transform:scaleX(0.9100)">1 042 263</div><div class="a" style="left:473.28px;top:361px;color:#000;transform:scaleX(0.9100)">611 462</div><div class="a" style="left:523.68px;top:361px;color:#000;transform:scaleX(0.9239)">Файл &quot;BTXT&quot;</div><div class="a" style="left:643.47px;top:361px;color:#000;transform:scaleX(0.9260)">24.11.2074 0:00</div><div class="a" style="left:743.30px;top:361px;color:#000;transform:scaleX(0.9000)">64E06105</div><div class="a" style="left:26.60px;top:380px;color:#000;transform:scaleX(1.0024)">spanish.win.btxt</div><div class="a" style="left:383.47px;top:380px;color:#000;transform:scaleX(0.9100)">1 157 925</div><div class="a" style="left:472.37px;top:380px;color:#000;transform:scaleX(0.9100)">663 344</div><div class="a" style="left:523.68px;top:380px;color:#000;transform:scaleX(0.9239)">Файл &quot;BTXT&quot;</div><div class="a" style="left:643.47px;top:380px;color:#000;transform:scaleX(0.9260)">24.11.2074 0:00</div><div class="a" style="left:743.29px;top:380px;color:#000;transform:scaleX(0.9143)">1403C0C3</div><div class="a" style="left:26.60px;top:399px;color:#000;transform:scaleX(0.9800)">text_ui_menus.xml</div><div class="a" style="left:398.94px;top:399px;color:#000;transform:scaleX(0.9100)">19 197</div><div class="a" style="left:484.20px;top:399px;color:#000;transform:scaleX(0.9100)">3 253</div><div class="a" style="left:524.60px;top:399px;color:#000;transform:scaleX(0.9852)">Документ XML</div><div class="a" style="left:643.47px;top:399px;color:#000;transform:scaleX(0.9260)">24.11.2074 0:00</div><div class="a" style="left:743.29px;top:399px;color:#000;transform:scaleX(0.9070)">ED180D56</div><div class="a" style="left:523.51px;top:171px;color:#cfe6fb;transform:scaleX(0.9866)">Папка с файлами</div></body></html>
